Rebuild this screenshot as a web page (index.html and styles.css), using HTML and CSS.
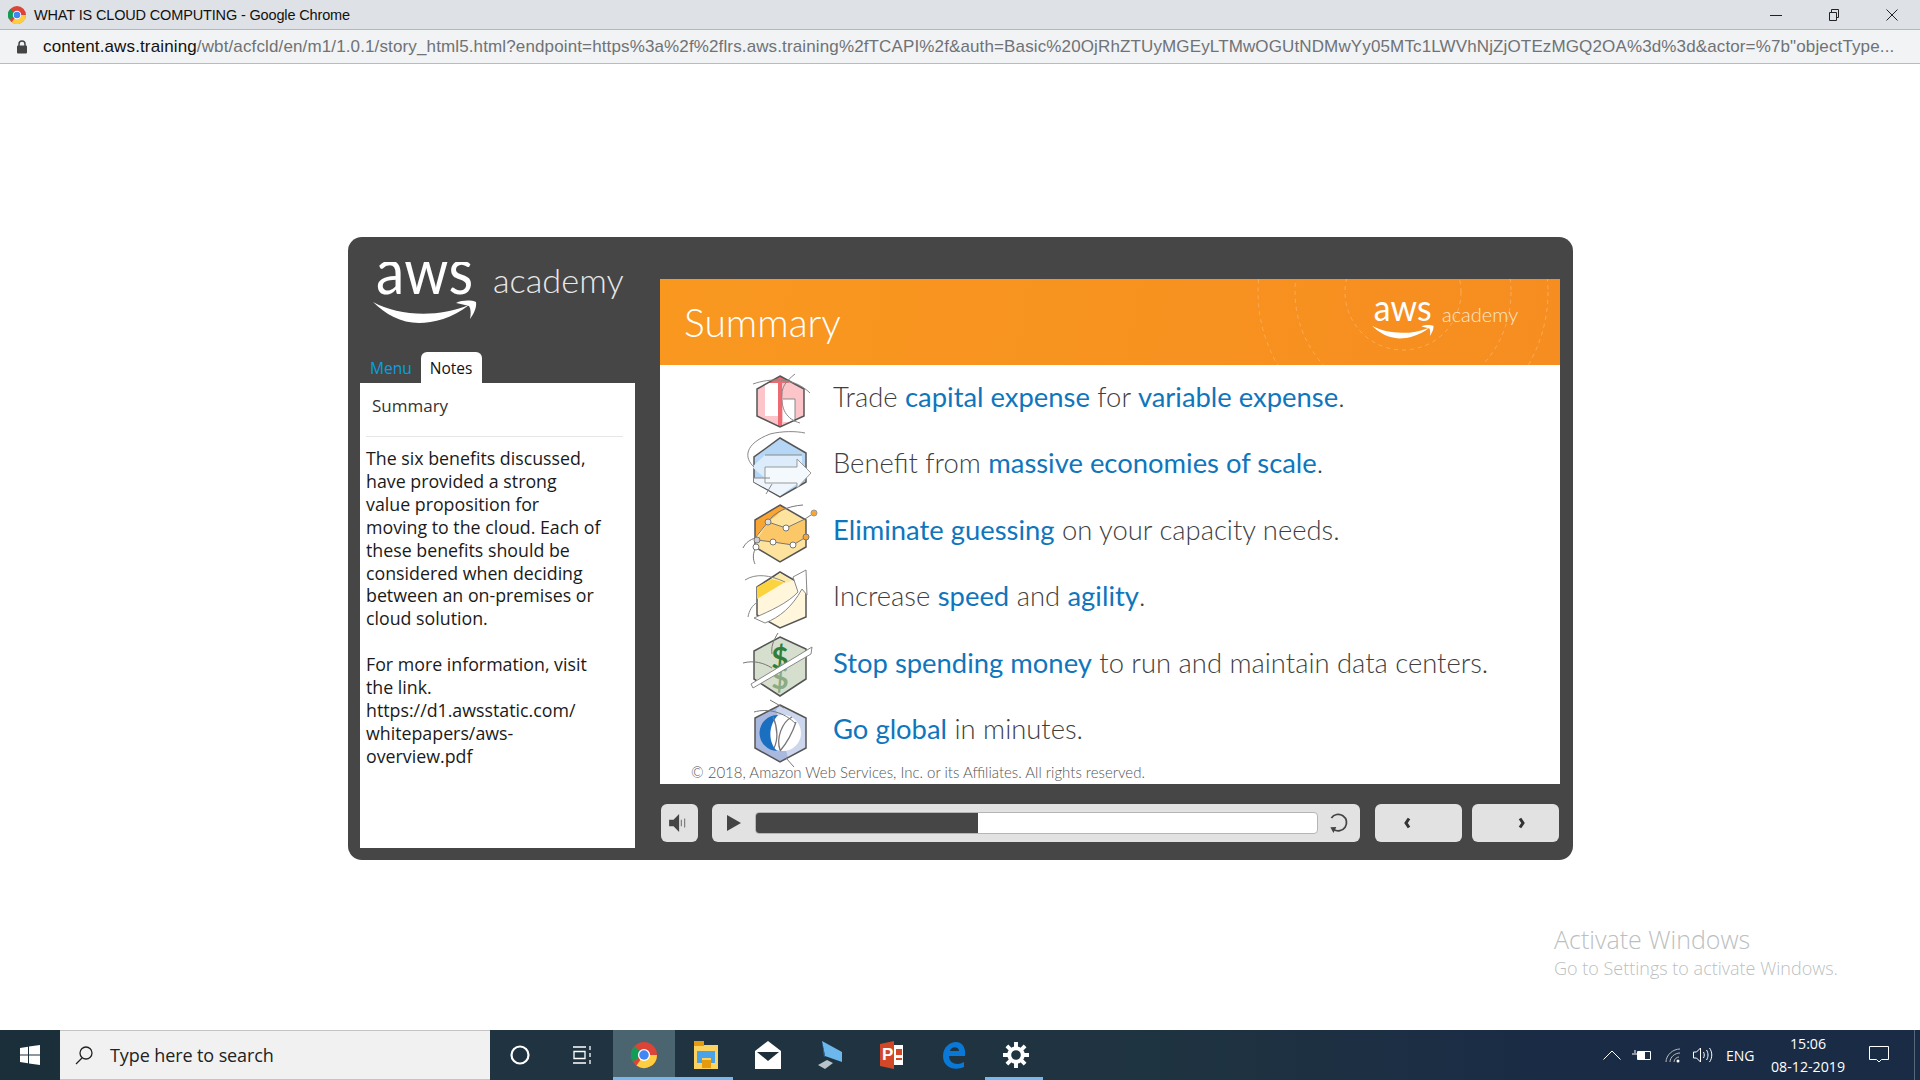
FILE: index.html
```html
<!DOCTYPE html>
<html lang="en">
<head>
<meta charset="utf-8">
<title>WHAT IS CLOUD COMPUTING - Google Chrome</title>
<link rel="stylesheet" href="styles.css">
</head>
<body>
<svg width="0" height="0" class="defs">
  <symbol id="aws" viewBox="0 0 104 62">
    <text x="3" y="32" class="aws-word" textLength="97" lengthAdjust="spacingAndGlyphs">aws</text>
    <path d="M0 40C25 54 65 56 96 43C80 56 60 61 46 61C28 61 12 52 0 40Z" fill="#fff"/>
    <path d="M83 41C89 38 98 38 103 40C104 46 100 53 97 57C98 52 98 47 96 44C92 43 88 42 83 41Z" fill="#fff"/>
  </symbol>
</svg>
<div class="screen">
  <header class="titlebar">
    <svg class="favicon" viewBox="0 0 24 24"><circle cx="12" cy="12" r="12" fill="#db4437"/><path d="M12 12L1.6 18A12 12 0 0 1 3 4Z" fill="#0f9d58"/><path d="M12 12h12A12 12 0 0 1 5 21.8Z" fill="#ffcd40"/><circle cx="12" cy="12" r="5.6" fill="#fff"/><circle cx="12" cy="12" r="4.4" fill="#4285f4"/></svg>
    <span class="title-text">WHAT IS CLOUD COMPUTING - Google Chrome</span>
    <div class="winbtns">
      <svg viewBox="0 0 12 12"><path d="M0 6.500h12" stroke="#222" fill="none"/></svg>
      <svg viewBox="0 0 12 12"><path d="M1.500 3.500h7v8h-7zM3.500 3.500V.5h7v8h-2" stroke="#222" fill="none"/></svg>
      <svg viewBox="0 0 12 12"><path d="M.5 .5l11 11M11.500 .5l-11 11" stroke="#222" fill="none"/></svg>
    </div>
  </header>
  <div class="addressbar">
    <svg class="lock" viewBox="0 0 10 14"><path d="M2 6V4a3 3 0 0 1 6 0v2" fill="none" stroke="#444" stroke-width="1.500"/><rect y="5.500" width="10" height="8" rx="1" fill="#444"/></svg>
    <span class="url"><b>content.aws.training</b>/wbt/acfcld/en/m1/1.0.1/story_html5.html?endpoint=https%3a%2f%2flrs.aws.training%2fTCAPI%2f&amp;auth=Basic%20OjRhZTUyMGEyLTMwOGUtNDMwYy05MTc1LWVhNjZjOTEzMGQ2OA%3d%3d&amp;actor=%7b"objectType...</span>
  </div>

  <main class="page">
    <section class="player">
      <aside class="side">
        <div class="brand">
          <svg class="brand-logo"><use href="#aws"/></svg>
          <span class="brand-name">academy</span>
        </div>
        <nav class="tabs">
          <span class="tab">Menu</span>
          <span class="tab tab-on">Notes</span>
        </nav>
        <div class="notes">
          <div class="notes-head">Summary</div>
          <p class="notes-body">The six benefits discussed,<br>have provided a strong<br>value proposition for<br>moving to the cloud. Each of<br>these benefits should be<br>considered when deciding<br>between an on-premises or<br>cloud solution.</p>
          <p class="notes-body">For more information, visit<br>the link.<br>https://d1.awsstatic.com/<br>whitepapers/aws-<br>overview.pdf</p>
        </div>
      </aside>
      <div class="stage">
        <div class="slide">
          <div class="banner">
            <svg class="rings" viewBox="0 0 340 86">
              <g fill="none" stroke="#fbab5a" stroke-width="1" stroke-dasharray="4 4">
                <circle cx="183" cy="13" r="58"/>
                <circle cx="183" cy="13" r="108"/>
                <circle cx="183" cy="13" r="145"/>
              </g>
            </svg>
            <h1 class="banner-title">Summary</h1>
            <div class="banner-brand">
              <svg class="banner-logo"><use href="#aws"/></svg>
              <span class="banner-name">academy</span>
            </div>
          </div>
          <ul class="points">
            <li class="point">
              <svg class="hex" viewBox="0 0 80 66">
                <path d="M40 9L64 22V49L40 60L17 49V22Z" fill="#fbc5c9"/>
                <path d="M25 16h13v33H25Z" fill="#fff"/>
                <path d="M28 16L40 9L50 16Z" fill="#ee6a72"/>
                <path d="M38 16h4v44h-4Z" fill="#ee6a72"/>
                <path d="M43 32h12v23H43Z" fill="#fff"/>
                <path d="M43 32h12v23" fill="none" stroke="#888"/>
                <path d="M40 9L64 22V49L40 60L17 49V22Z" fill="none" stroke="#555" stroke-width="1.500"/>
                <path d="M13 17C30 11 54 10 70 26M55 7C46 14 42 20 42 27C41 42 46 52 60 56" fill="none" stroke="#888"/>
              </svg>
              <p>Trade <b>capital expense</b> for <b>variable expense</b>.</p>
            </li>
            <li class="point">
              <svg class="hex" viewBox="0 0 80 66">
                <path d="M40 4L66 19V48L40 63L14 48V23Z" fill="#b5d7f5" stroke="#555" stroke-width="1.500"/>
                <path d="M62 21H25L12 33L25 44H62Z" fill="#dcecfb"/>
                <path d="M14 44H57V50L40 62L14 48Z" fill="#eef5fc"/>
                <path d="M25 33H57V25L71 39L57 54V49H25Z" fill="#f4f9fe" stroke="#999"/>
                <path d="M14 33C4 24 4 10 30 0C42 -3 56 -3 65 -1M13 44H30M32 50L26 60" fill="none" stroke="#888"/>
                <path d="M25 21H62" stroke="#888" fill="none"/>
              </svg>
              <p>Benefit from <b>massive economies of scale</b>.</p>
            </li>
            <li class="point">
              <svg class="hex" viewBox="0 0 80 66">
                <path d="M40 5L66 20V47L40 62L15 47V20Z" fill="#fde39d"/>
                <path d="M40 5L15 20V37L28 22L45 8Z" fill="#f9a533"/>
                <path d="M28 22L46 28L66 19V37L53 45L33 42L17 40Z" fill="#fcc767"/>
                <path d="M40 5L66 20V47L40 62L15 47V20Z" fill="none" stroke="#555" stroke-width="1.500"/>
                <path d="M15 38L28 22L46 28L65 19L74 13M17 40L33 42L53 45L66 37M28 22C34 12 48 6 63 5M3 48C6 42 10 40 15 38M17 47C12 52 13 60 15 64" fill="none" stroke="#777"/>
                <circle cx="28" cy="22" r="3" fill="#ddd" stroke="#777"/><circle cx="46" cy="28" r="3" fill="#fff" stroke="#777"/><circle cx="17" cy="40" r="3" fill="#ccc" stroke="#777"/><circle cx="16" cy="47" r="3" fill="#fff" stroke="#777"/><circle cx="33" cy="42" r="3" fill="#fff" stroke="#777"/><circle cx="53" cy="45" r="3" fill="#fff" stroke="#777"/><circle cx="66" cy="37" r="3" fill="#f9a533" stroke="#777"/><circle cx="74" cy="13" r="3" fill="#f9a533" stroke="#999"/>
              </svg>
              <p><b>Eliminate guessing</b> on your capacity needs.</p>
            </li>
            <li class="point">
              <svg class="hex" viewBox="0 0 80 66">
                <path d="M40 5L66 20V50L40 61L17 48V20Z" fill="#fff6dc" stroke="#555" stroke-width="1.500"/>
                <path d="M17 20L32 12L45 15L17 32Z" fill="#fbd33e"/>
                <path d="M32 12L40 6L52 14L45 16Z" fill="#fde9a8"/>
                <path d="M14 51C30 44 48 36 58 25L53 10L66 3L67 28L62 22C52 40 40 50 25 56Z" fill="#fff" stroke="#888"/>
                <path d="M5 13C16 6 30 8 45 15M8 50C9 44 12 38 18 35" fill="none" stroke="#888"/>
              </svg>
              <p>Increase <b>speed</b> and <b>agility</b>.</p>
            </li>
            <li class="point">
              <svg class="hex" viewBox="0 0 80 66">
                <path d="M40 4L66 16V46L40 63L14 46V18Z" fill="#d6dfcd" stroke="#555" stroke-width="1.500"/>
                <text x="40" y="36" class="dollar dollar-a">$</text>
                <text x="40" y="56" class="dollar dollar-b">$</text>
                <path d="M11 51L72 14L71 21L13 55Z" fill="#fff" stroke="#888"/>
                <path d="M3 30C14 27 24 30 32 35M38 0C33 8 31 14 32 21" fill="none" stroke="#777"/>
              </svg>
              <p><b>Stop spending money</b> to run and maintain data centers.</p>
            </li>
            <li class="point">
              <svg class="hex" viewBox="0 0 80 66">
                <path d="M40 5L66 18V48L40 62L15 48V18Z" fill="#a8b8de"/>
                <path d="M40 5L66 18V48L48 58L36 10Z" fill="#ccd6ec"/>
                <circle cx="43" cy="33" r="18" fill="#fff"/>
                <path d="M38 15A18 18 0 0 0 37 51C28 42 28 26 38 15Z" fill="#1b6fc0"/>
                <path d="M40 5L66 18V48L40 62L15 48V18Z" fill="none" stroke="#555" stroke-width="1.500"/>
                <path d="M52 17C42 22 36 38 40 50M56 22C52 34 46 44 40 51M33 17C38 28 38 40 34 48" fill="none" stroke="#777" stroke-width="1.300"/>
                <path d="M14 12C28 8 44 12 56 24M30 0L44 8M46 58L54 67" fill="none" stroke="#777"/>
              </svg>
              <p><b>Go global</b> in minutes.</p>
            </li>
          </ul>
          <footer class="copyright">© 2018, Amazon Web Services, Inc. or its Affiliates. All rights reserved.</footer>
        </div>
        <div class="controls">
          <button class="ctl ctl-vol" aria-label="Volume">
            <svg viewBox="0 0 18 18"><path d="M1 6h4l5-5v16l-5-5H1Z" fill="#444"/><path d="M12 6v6M15 5v8" stroke="#777" fill="none"/></svg>
          </button>
          <div class="ctl ctl-seek">
            <svg class="play" viewBox="0 0 14 16"><path d="M0 0l14 8L0 16Z" fill="#444"/></svg>
            <div class="track"><div class="fill" style="width:39.5%"></div></div>
            <svg class="replay" viewBox="0 0 20 20"><path d="M6 15.800A7.500 7.500 0 1 0 4 5.500" fill="none" stroke="#444" stroke-width="1.600"/><path d="M7 19L7.500 13L2.500 15Z" fill="#444" transform="rotate(20 6 16)"/></svg>
          </div>
          <button class="ctl ctl-nav ctl-prev" aria-label="Previous"><svg viewBox="0 0 8 12"><path d="M6 1.500L3 6l3 4.500" fill="none" stroke="#333" stroke-width="3"/></svg></button>
          <button class="ctl ctl-nav ctl-next" aria-label="Next"><svg viewBox="0 0 8 12"><path d="M2 1.500L5 6l-3 4.500" fill="none" stroke="#333" stroke-width="3"/></svg></button>
        </div>
      </div>
    </section>
    <div class="watermark">
      <div class="wm-1">Activate Windows</div>
      <div class="wm-2">Go to Settings to activate Windows.</div>
    </div>
  </main>

  <footer class="taskbar">
    <div class="start"><svg viewBox="0 0 20 20"><path d="M0 3l8-1.200V9.500H0ZM9 1.600L20 0v9.500H9ZM0 10.500h8v7.800L0 17ZM9 10.500h11V20L9 18.500Z" fill="#fff"/></svg></div>
    <div class="search">
      <svg viewBox="0 0 20 20"><circle cx="12" cy="8" r="6" fill="none" stroke="#222" stroke-width="1.300"/><path d="M8 13L2 19" stroke="#222" stroke-width="1.300"/></svg>
      <span>Type here to search</span>
    </div>
    <div class="tb-icons">
      <div class="tb tb-sm"><svg viewBox="0 0 20 20"><circle cx="10" cy="10" r="8.500" fill="none" stroke="#fff" stroke-width="2.200"/></svg></div>
      <div class="tb tb-sm"><svg viewBox="0 0 20 20"><path d="M1 2h13M1 18h13M2 6.500h11v7H2ZM18 1v4M18 8v4M18 15v4" fill="none" stroke="#fff" stroke-width="1.300"/></svg></div>
      <div class="tb tb-active"><svg viewBox="0 0 24 24"><circle cx="12" cy="12" r="12" fill="#db4437"/><path d="M12 12L1.600 18A12 12 0 0 1 3 4Z" fill="#0f9d58"/><path d="M12 12h12A12 12 0 0 1 5 21.800Z" fill="#ffcd40"/><circle cx="12" cy="12" r="5.600" fill="#fff"/><circle cx="12" cy="12" r="4.400" fill="#4285f4"/></svg></div>
      <div class="tb tb-open"><svg viewBox="0 0 24 28"><path d="M0 0h10v4h14v24H0Z" fill="#fdd35f"/><path d="M0 0h10v5H0Z" fill="#e59b0d"/><path d="M3 10h18v12h-4v-5H8v5H3Z" fill="#4aa3e8"/><rect x="8" y="19" width="9" height="8" fill="#e59b0d"/></svg></div>
      <div class="tb"><svg viewBox="0 0 26 28"><path d="M13 0L26 10V28H0V10Z" fill="#fff"/><path d="M2 11h22L13 20Z" fill="#1d2f38"/></svg></div>
      <div class="tb"><svg viewBox="0 0 26 28"><path d="M5 0l20 11v10L8 15Z" fill="#6cb8ec"/><path d="M5 0l3 15-1 1Z" fill="#2b6ea8"/><path d="M1 24l9-5 6 3-8 6Z" fill="#b8c4ca"/></svg></div>
      <div class="tb"><svg viewBox="0 0 24 28"><path d="M0 3L14 0v28L0 25Z" fill="#d24726"/><path d="M14 4h9v20h-9Z" fill="#fff"/><path d="M16 8h6v6h-6ZM16 17h6v2h-6Z" fill="#d24726"/><text x="2" y="19" class="ppt">P</text></svg></div>
      <div class="tb"><svg viewBox="0 0 24 28"><path d="M23 15H7c0 8 9 10 15 6v5c-9 4-21 1-21-11C1 6 8 1 14 1c6 0 10 5 9 14ZM8 10h9c0-5-8-5-9 0Z" fill="#0a78d7"/></svg></div>
      <div class="tb tb-open"><svg viewBox="0 0 20 20"><circle cx="10" cy="10" r="5.200" fill="none" stroke="#fff" stroke-width="3"/><path d="M10 0v4M10 16v4M0 10h4M16 10h4M3 3l3 3M14 14l3 3M17 3l-3 3M6 14l-3 3" stroke="#fff" stroke-width="3"/></svg></div>
    </div>
    <div class="tray">
      <svg class="t-chev" viewBox="0 0 18 10"><path d="M.5 9.500L9 1l8.500 8.500" fill="none" stroke="#fff"/></svg>
      <svg class="t-batt" viewBox="0 0 20 12"><path d="M5.500 2.500h13v8h-13Z" fill="none" stroke="#fff"/><rect x="6" y="3" width="7" height="7" fill="#fff"/><path d="M0 5h5M3 1v3" stroke="#fff"/></svg>
      <svg class="t-wifi" viewBox="0 0 16 16"><path d="M1 15C1 8 8 2 15 2M5 15C5 10 10 6 15 6M9 15c0-3 3-5 5-5" fill="none" stroke="#bbb"/><circle cx="13" cy="14" r="1.500" fill="#fff"/></svg>
      <svg class="t-vol" viewBox="0 0 20 16"><path d="M1 5h3l4-4v14l-4-4H1Z" fill="none" stroke="#fff"/><path d="M11 5c1 2 1 4 0 6M14 3c2 3 2 7 0 10M17 1c3 4 3 10 0 14" fill="none" stroke="#fff"/></svg>
      <span class="t-lang">ENG</span>
      <div class="t-clock"><span>15:06</span><span>08-12-2019</span></div>
      <svg class="t-note" viewBox="0 0 20 20"><path d="M.5 1.500h19v13h-7l-2.500 2.500-2.500-2.500h-7Z" fill="none" stroke="#fff"/></svg>
      <div class="t-desk"></div>
    </div>
  </footer>
</div>
</body>
</html>
```
FILE: styles.css
```css
* { box-sizing: border-box; }
html, body { margin: 0; padding: 0; height: 100%; background: #fff; overflow: hidden; }
.defs { position: absolute; }
.screen { width: 1920px; height: 1080px; display: flex; flex-direction: column; font-family: "Open Sans", sans-serif; }

/* browser chrome */
.titlebar { height: 30px; background: #dee1e6; border-bottom: 1px solid #b4b6ba; display: flex; align-items: center; padding-left: 8px; flex: none; }
.favicon { width: 18px; height: 18px; flex: none; }
.title-text { margin-left: 8px; font: 14.500px "Liberation Sans", sans-serif; color: #111; letter-spacing: -.15px; white-space: nowrap; }
.winbtns { margin-left: auto; display: flex; gap: 46px; padding-right: 22px; }
.winbtns svg { width: 12px; height: 12px; display: block; }
.addressbar { height: 34px; background: #f1f3f4; border-bottom: 1px solid #b9bbbe; display: flex; align-items: center; padding-left: 17px; flex: none; }
.lock { width: 10px; height: 14px; flex: none; }
.url { margin-left: 16px; font: 17px "Liberation Sans", sans-serif; color: #6f7276; white-space: nowrap; letter-spacing: .13px; }
.url b { font-weight: 400; color: #111; }

/* page */
.page { flex: 1; position: relative; padding: 173px 0 0 348px; }
.player { width: 1225px; height: 623px; background: #464646; border-radius: 14px; display: flex; padding: 0 13px 12px 12px; }

.side { width: 275px; display: flex; flex-direction: column; flex: none; }
.brand { height: 115px; display: flex; align-items: flex-start; padding: 25px 0 0 13px; flex: none; }
.brand-logo { width: 104px; height: 62px; flex: none; }
.brand-name { margin: -3px 0 0 16px; font: 300 34.300px "Lato", sans-serif; color: #e8e8e8; }
.aws-word { font: 400 63px "Lato", sans-serif; fill: #fff; }
.tabs { display: flex; align-items: flex-end; height: 31px; flex: none; padding-left: 10px; }
.tab { font: 15.500px "Open Sans", sans-serif; color: #0a9fe0; padding-right: 9px; height: 31px; line-height: 32px; }
.tab-on { background: #fff; color: #111; width: 61px; padding: 0; text-align: center; border-radius: 6px 6px 0 0; }
.notes { flex: 1; background: #fff; padding: 11px 6px 0; color: #1a1a1a; }
.notes-head { font: 17px "Open Sans", sans-serif; color: #333; padding: 0 0 18px 6px; margin-bottom: 10px; margin-right: 6px; border-bottom: 1px solid #e6e6e6; line-height: 24px; }
.notes-body { margin: 0 0 23px; font: 17.800px/22.900px "Open Sans", sans-serif; white-space: nowrap; }

.stage { width: 900px; margin-left: 25px; display: flex; flex-direction: column; padding-top: 42px; flex: none; }
.slide { height: 505px; background: #fff; display: flex; flex-direction: column; flex: none; }
.banner { height: 86px; background: linear-gradient(100deg, #f9981f, #f68d20); position: relative; display: flex; align-items: center; padding: 0 24px; flex: none; }
.rings { position: absolute; right: 0; top: 0; width: 340px; height: 86px; }
.banner-title { position: relative; margin: 0; font: 300 39px "Lato", sans-serif; color: #fff; }
.banner-brand { position: absolute; left: 712px; top: 23px; display: flex; align-items: flex-start; }
.banner-logo { width: 62px; height: 37px; flex: none; }
.banner-name { margin: 0 0 0 8px; font: 300 20px "Lato", sans-serif; color: #fde6c8; }

.points { list-style: none; margin: 0; padding: 2px 0 0 80px; flex: 1; min-height: 0; }
.point { height: 66.500px; display: flex; align-items: center; }
.hex { width: 80px; height: 66px; flex: none; overflow: visible; }
.point p { margin: 0 0 8px 13px; font: 300 27.400px "Lato", sans-serif; color: #3f3f3f; white-space: nowrap; }
.point b { font-weight: 400; color: #0f76bd; }
.dollar { font: 700 30px "Lato", sans-serif; text-anchor: middle; }
.dollar-a { fill: #2f7f3a; }
.dollar-b { fill: #8aab83; }
.copyright { flex: none; font: 300 15px "Lato", sans-serif; color: #555; padding: 0 0 3px 31px; line-height: 18px; }

.controls { display: flex; margin-top: 20px; height: 38px; padding-left: 1px; }
.ctl { background: #e2e2e2; border: 0; border-radius: 6px; padding: 0; display: flex; align-items: center; justify-content: center; }
.ctl-vol { width: 37px; margin-right: 14px; padding-right: 3px; }
.ctl-vol svg { width: 20px; height: 20px; }
.ctl-seek { width: 648px; justify-content: flex-start; padding-left: 15px; margin-right: 15px; }
.play { width: 14px; height: 16px; flex: none; }
.track { width: 563px; height: 22px; margin-left: 14px; background: #fff; border: 1px solid #b5b5b5; border-radius: 4px; overflow: hidden; flex: none; }
.fill { height: 100%; background: #464646; }
.replay { width: 22px; height: 22px; margin-left: 9px; flex: none; }
.ctl-nav { width: 87px; margin-right: 10px; }
.ctl-nav:last-child { margin-right: 0; }
.ctl-nav svg { width: 8px; height: 12px; }
.ctl-prev { padding-right: 24px; }
.ctl-next { padding-left: 12px; }

.watermark { position: absolute; left: 1554px; top: 858px; color: #bcbfc1; }
.wm-1 { font: 300 25px/34px "Open Sans", sans-serif; }
.wm-2 { font: 300 18px/24px "Open Sans", sans-serif; }

/* taskbar */
.taskbar { height: 50px; background: linear-gradient(90deg, #1f3440 0, #1f3440 58%, #1a2c45 80%); display: flex; align-items: stretch; flex: none; color: #fff; }
.start { width: 60px; display: flex; align-items: center; justify-content: center; background: #1b2f3a; }
.start svg { width: 20px; height: 20px; }
.search { width: 430px; background: #f1f1f1; border-top: 1px solid #c4c4c4; border-bottom: 1px solid #c4c4c4; display: flex; align-items: center; padding-left: 14px; color: #222; }
.search svg { width: 20px; height: 20px; flex: none; }
.search span { margin-left: 16px; font: 18px "Open Sans", sans-serif; letter-spacing: -.1px; }
.tb-icons { display: flex; margin-left: -1px; }
.tb { width: 62px; display: flex; align-items: center; justify-content: center; position: relative; }
.tb svg { width: 26px; height: 28px; }
.tb-sm svg { width: 20px; height: 20px; }
.tb-active { background: #4a6470; }
.tb-active::after, .tb-open::after { content: ""; position: absolute; left: 0; right: 0; bottom: 0; height: 3px; background: #76b9ed; }
.tb-open::after { left: 0; right: 4px; }
.ppt { font: 700 17px "Liberation Sans", sans-serif; fill: #fff; }
.tray { margin-left: auto; display: flex; align-items: center; width: 317px; flex: none; }
.tray svg { flex: none; }
.t-chev { width: 18px; height: 10px; }
.t-batt { width: 20px; height: 12px; margin-left: 11px; }
.t-wifi { width: 16px; height: 16px; margin-left: 13px; }
.t-vol { width: 21px; height: 16px; margin-left: 11px; }
.t-lang { margin-left: 13px; width: 28px; font: 14px "Open Sans", sans-serif; white-space: nowrap; }
.t-clock { margin-left: 16px; width: 76px; display: flex; flex-direction: column; align-items: center; font: 14.200px/23px "Open Sans", sans-serif; white-space: nowrap; flex: none; }
.t-note { width: 20px; height: 20px; margin-left: 23px; }
.t-desk { width: 1px; height: 100%; margin-left: 25px; background: #56677a; flex: none; }
```
